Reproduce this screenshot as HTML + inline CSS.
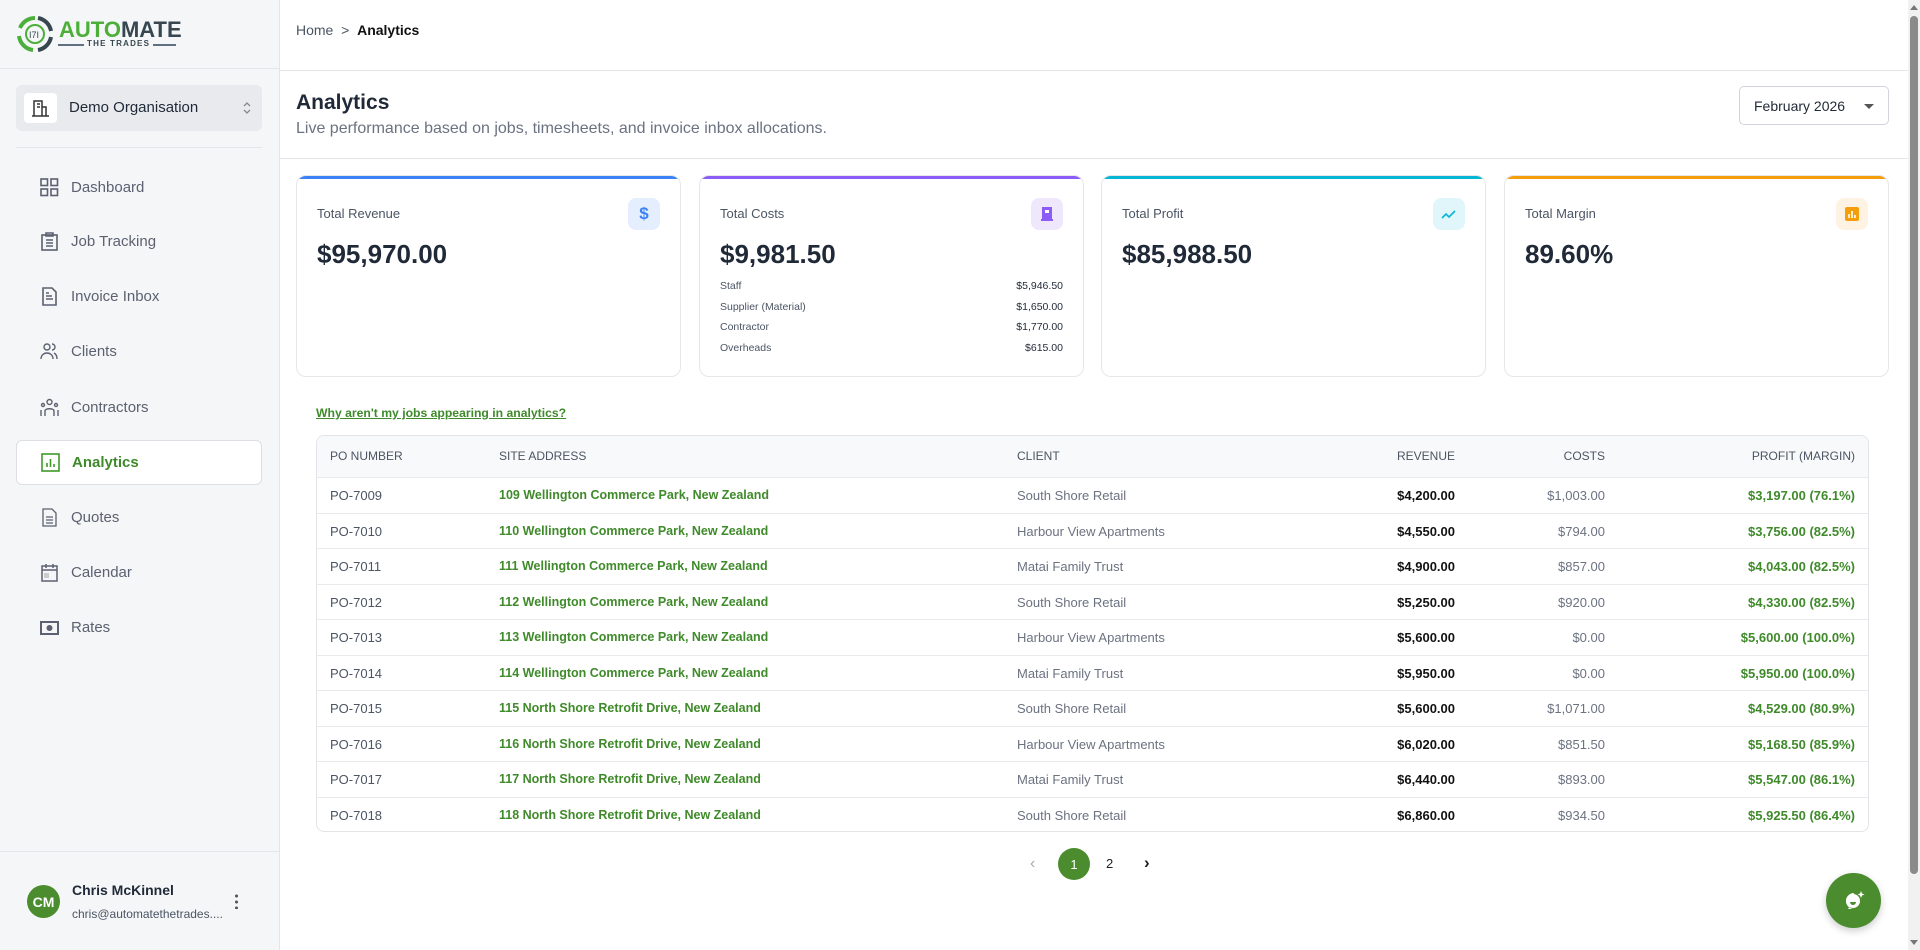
<!DOCTYPE html>
<html><head><meta charset="utf-8"><style>
*{box-sizing:border-box;margin:0;padding:0}
body{width:1920px;height:950px;overflow:hidden;font-family:"Liberation Sans",sans-serif;background:#fff;color:#1f2937;position:relative}
.abs{position:absolute}
.sb{left:0;top:0;width:280px;height:950px;background:#f5f6f8;border-right:1px solid #e3e5e8}
.nav{position:absolute;left:16px;width:246px;height:45px;display:flex;align-items:center;font-size:15px;color:#5b6170}
.nav svg{position:absolute;left:24px}
.nav span{position:absolute;left:55px}
.nav.act{background:#fff;border:1px solid #dcdfe3;border-radius:6px;color:#3f8a2a;font-weight:bold}
.card{position:absolute;top:175px;width:385px;height:202px;border:1px solid #e5e7eb;border-radius:10px;background:#fff;overflow:hidden}
.card .bar{position:absolute;left:0;top:0;right:0;height:3px}
.card .lbl{position:absolute;left:20px;top:30px;font-size:13px;color:#4b5563}
.card .val{position:absolute;left:20px;top:63px;font-size:26px;font-weight:bold;color:#1f2937}
.card .ic{position:absolute;right:20px;top:22px;width:32px;height:32px;border-radius:8px;display:flex;align-items:center;justify-content:center}
.cr{position:absolute;left:20px;right:20px;font-size:10.5px;color:#4b5563}
.cr b{position:absolute;right:0;top:0;color:#1f2937;font-weight:normal}
.tbl{left:316px;top:435px;width:1553px;height:397px;border:1px solid #e2e4e8;border-radius:8px;overflow:hidden}
.row{position:absolute;left:0;width:100%;height:36px;border-top:1px solid #e8eaed;font-size:13px}
.row div{position:absolute;top:10px;white-space:nowrap}
.hd{top:0;height:41px;background:#f8f9fa;border-top:none;color:#4b5563;font-size:12px}
.hd div{top:13px}
.c1{left:13px;color:#4b5563}.c2{left:182px;color:#3f8a2a;font-weight:bold;font-size:12.5px}.c3{left:700px;color:#6b7280}
.c4{right:413px;font-weight:bold;color:#111}.c5{right:263px;color:#6b7280}.c6{right:13px;color:#3f8a2a;font-weight:bold}
.hd .c2,.hd .c4,.hd .c6{color:#4b5563;font-weight:normal;font-size:12px}.hd .c3,.hd .c5,.hd .c1{color:#4b5563}
</style></head><body>
<div class="abs sb"></div>
<svg class="abs" style="left:15px;top:15px" width="40" height="38" viewBox="0 0 40 38"><path d="M20 3a16 16 0 0 0-15 10" stroke="#4caf3a" stroke-width="4" fill="none"/><path d="M4 21a16 16 0 0 0 14 14" stroke="#4caf3a" stroke-width="4" fill="none"/><path d="M23 3a16 16 0 0 1 13 13M36 22a16 16 0 0 1-13 13" stroke="#37474f" stroke-width="4" fill="none"/><circle cx="20" cy="19" r="9" fill="none" stroke="#4caf3a" stroke-width="2"/><text x="14" y="23" font-size="9" fill="#37474f" font-family="Liberation Sans">I7I</text></svg>
<div class="abs" style="left:59px;top:19px;font-size:22px;font-weight:bold;line-height:22px"><span style="color:#4caf3a">AUTO</span><span style="color:#37474f">MATE</span></div>
<div class="abs" style="left:58px;top:44px;width:118px;height:2px;background:#607080"></div>
<div class="abs" style="left:84px;top:39px;background:#f5f6f8;padding:0 3px;font-size:8px;font-weight:bold;color:#37474f;letter-spacing:1.2px">THE TRADES</div>
<div class="abs" style="left:0;top:68px;width:280px;height:1px;background:#e3e5e8"></div>
<div class="abs" style="left:16px;top:85px;width:246px;height:46px;background:#e8eaee;border-radius:6px"></div>
<div class="abs" style="left:24px;top:93px;width:33px;height:30px;background:#fff;border-radius:4px"></div>
<svg class="abs" style="left:31px;top:99px" width="20" height="18" viewBox="0 0 20 18" fill="none" stroke="#333" stroke-width="1.5"><path d="M3 17V2h8v15M11 8h4v9M1 17h17M6 5h3M6 8h3"/></svg>
<div class="abs" style="left:69px;top:99px;font-size:15px;color:#1f2937">Demo Organisation</div>
<svg class="abs" style="left:242px;top:100px" width="10" height="16" viewBox="0 0 10 16" fill="none" stroke="#888" stroke-width="1.3"><path d="M2 6l3-3 3 3M2 10l3 3 3-3"/></svg>
<div class="abs" style="left:16px;top:147px;width:246px;height:1px;background:#e3e5e8"></div>

<div class="nav" style="top:165px"><svg width="19" height="19" viewBox="0 0 19 19" fill="none" stroke="#5b6170" stroke-width="1.6"><rect x="1" y="1" width="6.5" height="6.5"/><rect x="11" y="1" width="6.5" height="6.5"/><rect x="1" y="11" width="6.5" height="6.5"/><rect x="11" y="11" width="6.5" height="6.5"/></svg><span>Dashboard</span></div>
<div class="nav" style="top:219px"><svg width="19" height="19" viewBox="0 0 19 19" fill="none" stroke="#5b6170" stroke-width="1.6"><rect x="2" y="3" width="15" height="15"/><path d="M6 1h7v3H6zM6 8h7M6 11h7M6 14h7"/></svg><span>Job Tracking</span></div>
<div class="nav" style="top:274px"><svg width="19" height="19" viewBox="0 0 19 19" fill="none" stroke="#5b6170" stroke-width="1.6"><path d="M3 1h9l4 4v13H3zM6 9h6M6 12h7M6 6h3"/></svg><span>Invoice Inbox</span></div>
<div class="nav" style="top:329px"><svg width="19" height="19" viewBox="0 0 19 19" fill="none" stroke="#5b6170" stroke-width="1.4"><circle cx="7" cy="5" r="3"/><path d="M1 17c0-4 3-6 6-6s6 2 6 6M12 2a3 3 0 0 1 0 6M14 11c2 1 3 3 3 6"/></svg><span>Clients</span></div>
<div class="nav" style="top:385px"><svg width="19" height="19" viewBox="0 0 19 19" fill="none" stroke="#5b6170" stroke-width="1.4"><circle cx="9.5" cy="4" r="2.5"/><circle cx="3" cy="7" r="1.5"/><circle cx="16" cy="7" r="1.5"/><path d="M5 18v-5c0-3 9-3 9 0v5M1 18v-6M18 18v-6"/></svg><span>Contractors</span></div>
<div class="nav act" style="top:440px"><svg width="19" height="19" viewBox="0 0 19 19" fill="none" stroke="#3f9a2a" stroke-width="1.6"><rect x="1" y="1" width="17" height="17"/><path d="M6 14v-4M9.5 14V6M13 14v-3"/></svg><span>Analytics</span></div>
<div class="nav" style="top:495px"><svg width="19" height="19" viewBox="0 0 19 19" fill="none" stroke="#5b6170" stroke-width="1.3"><path d="M3 1h9l4 4v13H3zM6 9h7M6 12h7M6 15h7"/></svg><span>Quotes</span></div>
<div class="nav" style="top:550px"><svg width="19" height="19" viewBox="0 0 19 19" fill="none" stroke="#5b6170" stroke-width="1.5"><rect x="2" y="3" width="15" height="15"/><path d="M2 7h15M6 1v4M13 1v4"/><rect x="4" y="10" width="5" height="5" fill="#ccc" stroke="none"/></svg><span>Calendar</span></div>
<div class="nav" style="top:605px"><svg width="19" height="19" viewBox="0 0 19 19"><rect x="1" y="4" width="17" height="12" fill="none" stroke="#5b6170" stroke-width="2"/><circle cx="9.5" cy="10" r="3" fill="#5b6170"/></svg><span>Rates</span></div>

<div class="abs" style="left:0;top:851px;width:280px;height:1px;background:#e3e5e8"></div>
<div class="abs" style="left:27px;top:885px;width:33px;height:33px;border-radius:50%;background:#4a8c2e;color:#fff;font-weight:bold;font-size:14px;display:flex;align-items:center;justify-content:center">CM</div>
<div class="abs" style="left:72px;top:882px;font-size:14px;font-weight:bold;color:#1f2937">Chris McKinnel</div>
<div class="abs" style="left:72px;top:907px;font-size:12px;color:#4b5563">chris@automatethetrades....</div>
<div class="abs" style="left:235px;top:893px;width:3px;height:16px;background:radial-gradient(circle,#555 1.4px,transparent 1.6px) 0 0/3px 6px"></div>

<div class="abs" style="left:296px;top:22px;font-size:14px;color:#4b5563">Home&nbsp;&nbsp;&gt;&nbsp;&nbsp;<span style="color:#111;font-weight:bold">Analytics</span></div>
<div class="abs" style="left:280px;top:70px;width:1628px;height:1px;background:#e3e5e8"></div>
<div class="abs" style="left:296px;top:91px;font-size:21px;font-weight:bold;color:#1f2937">Analytics</div>
<div class="abs" style="left:296px;top:120px;font-size:16px;color:#6b7280">Live performance based on jobs, timesheets, and invoice inbox allocations.</div>
<div class="abs" style="left:1739px;top:86px;width:150px;height:39px;border:1px solid #d1d5db;border-radius:5px;font-size:14px;color:#1f2937;padding:11px 0 0 14px">February 2026</div>
<div class="abs" style="left:1864px;top:104px;border:5px solid transparent;border-top:5px solid #555"></div>
<div class="abs" style="left:280px;top:158px;width:1628px;height:1px;background:#e3e5e8"></div>

<div class="card" style="left:296px"><div class="bar" style="background:#3b82f6"></div><div class="lbl">Total Revenue</div><div class="val">$95,970.00</div><div class="ic" style="background:#e4eefe;color:#3b82f6;font-weight:bold;font-size:17px">$</div></div>
<div class="card" style="left:699px"><div class="bar" style="background:#8b5cf6"></div><div class="lbl">Total Costs</div><div class="val">$9,981.50</div><div class="ic" style="background:#efe8fd"><svg width="14" height="16" viewBox="0 0 14 16"><rect x="2" y="1" width="10" height="13" fill="#8b5cf6"/><rect x="5" y="4" width="4" height="3" fill="#fff"/><rect x="1" y="13" width="12" height="2" fill="#8b5cf6"/></svg></div>
<div class="cr" style="top:104px">Staff<b>$5,946.50</b></div><div class="cr" style="top:125px">Supplier (Material)<b>$1,650.00</b></div><div class="cr" style="top:145px">Contractor<b>$1,770.00</b></div><div class="cr" style="top:166px">Overheads<b>$615.00</b></div></div>
<div class="card" style="left:1101px"><div class="bar" style="background:#06b6d4"></div><div class="lbl">Total Profit</div><div class="val">$85,988.50</div><div class="ic" style="background:#e0f6fb"><svg width="16" height="12" viewBox="0 0 16 12" fill="none" stroke="#06b6d4" stroke-width="1.6"><path d="M1 10l4-4 3 3 6-6"/></svg></div></div>
<div class="card" style="left:1504px"><div class="bar" style="background:#f59e0b"></div><div class="lbl">Total Margin</div><div class="val">89.60%</div><div class="ic" style="background:#fef3e2"><svg width="14" height="14" viewBox="0 0 14 14"><rect width="14" height="14" rx="2" fill="#f59e0b"/><path d="M4 11V7M7 11V4M10 11V8" stroke="#fff" stroke-width="1.6"/></svg></div></div>

<div class="abs" style="left:316px;top:406px;font-size:12.2px;font-weight:bold;color:#3f8a2a;text-decoration:underline">Why aren't my jobs appearing in analytics?</div>

<div class="abs tbl">
<div class="row hd"><div class="c1">PO NUMBER</div><div class="c2">SITE ADDRESS</div><div class="c3">CLIENT</div><div class="c4">REVENUE</div><div class="c5">COSTS</div><div class="c6">PROFIT (MARGIN)</div></div>
<div class="row" style="top:41px"><div class="c1">PO-7009</div><div class="c2">109 Wellington Commerce Park, New Zealand</div><div class="c3">South Shore Retail</div><div class="c4">$4,200.00</div><div class="c5">$1,003.00</div><div class="c6">$3,197.00 (76.1%)</div></div>
<div class="row" style="top:76.5px"><div class="c1">PO-7010</div><div class="c2">110 Wellington Commerce Park, New Zealand</div><div class="c3">Harbour View Apartments</div><div class="c4">$4,550.00</div><div class="c5">$794.00</div><div class="c6">$3,756.00 (82.5%)</div></div>
<div class="row" style="top:112px"><div class="c1">PO-7011</div><div class="c2">111 Wellington Commerce Park, New Zealand</div><div class="c3">Matai Family Trust</div><div class="c4">$4,900.00</div><div class="c5">$857.00</div><div class="c6">$4,043.00 (82.5%)</div></div>
<div class="row" style="top:147.5px"><div class="c1">PO-7012</div><div class="c2">112 Wellington Commerce Park, New Zealand</div><div class="c3">South Shore Retail</div><div class="c4">$5,250.00</div><div class="c5">$920.00</div><div class="c6">$4,330.00 (82.5%)</div></div>
<div class="row" style="top:183px"><div class="c1">PO-7013</div><div class="c2">113 Wellington Commerce Park, New Zealand</div><div class="c3">Harbour View Apartments</div><div class="c4">$5,600.00</div><div class="c5">$0.00</div><div class="c6">$5,600.00 (100.0%)</div></div>
<div class="row" style="top:218.5px"><div class="c1">PO-7014</div><div class="c2">114 Wellington Commerce Park, New Zealand</div><div class="c3">Matai Family Trust</div><div class="c4">$5,950.00</div><div class="c5">$0.00</div><div class="c6">$5,950.00 (100.0%)</div></div>
<div class="row" style="top:254px"><div class="c1">PO-7015</div><div class="c2">115 North Shore Retrofit Drive, New Zealand</div><div class="c3">South Shore Retail</div><div class="c4">$5,600.00</div><div class="c5">$1,071.00</div><div class="c6">$4,529.00 (80.9%)</div></div>
<div class="row" style="top:289.5px"><div class="c1">PO-7016</div><div class="c2">116 North Shore Retrofit Drive, New Zealand</div><div class="c3">Harbour View Apartments</div><div class="c4">$6,020.00</div><div class="c5">$851.50</div><div class="c6">$5,168.50 (85.9%)</div></div>
<div class="row" style="top:325px"><div class="c1">PO-7017</div><div class="c2">117 North Shore Retrofit Drive, New Zealand</div><div class="c3">Matai Family Trust</div><div class="c4">$6,440.00</div><div class="c5">$893.00</div><div class="c6">$5,547.00 (86.1%)</div></div>
<div class="row" style="top:360.5px"><div class="c1">PO-7018</div><div class="c2">118 North Shore Retrofit Drive, New Zealand</div><div class="c3">South Shore Retail</div><div class="c4">$6,860.00</div><div class="c5">$934.50</div><div class="c6">$5,925.50 (86.4%)</div></div>
</div>

<div class="abs" style="left:1030px;top:855px;font-size:16px;color:#aaa">‹</div>
<div class="abs" style="left:1058px;top:848px;width:32px;height:32px;border-radius:50%;background:#4a8c2e;color:#fff;font-size:13px;display:flex;align-items:center;justify-content:center">1</div>
<div class="abs" style="left:1106px;top:856px;font-size:13px;color:#222">2</div>
<div class="abs" style="left:1144px;top:853px;font-size:17px;color:#222;font-weight:bold">›</div>

<div class="abs" style="left:1826px;top:873px;width:55px;height:55px;border-radius:50%;background:#4a8c2e;box-shadow:0 3px 8px rgba(0,0,0,.2)"></div>
<svg class="abs" style="left:1841px;top:888px" width="26" height="26" viewBox="0 0 26 26"><path d="M13 5a8 8 0 1 0 0 16h-6l2-3" fill="#fff"/><circle cx="12" cy="13" r="7" fill="#fff"/><path d="M9 14h6a3 3 0 0 1-6 0z" fill="#4a8c2e"/><path d="M20 3l1 2.5 2.5 1-2.5 1-1 2.5-1-2.5-2.5-1 2.5-1z" fill="#fff"/></svg>

<div class="abs" style="left:1908px;top:0;width:12px;height:950px;background:#f1f1f1"></div>
<div class="abs" style="left:1910px;top:16px;width:8px;height:858px;background:#8a8a8a;border-radius:4px"></div>
<div class="abs" style="left:1910px;top:5px;border:4px solid transparent;border-bottom:5px solid #777;border-top:0"></div>
<div class="abs" style="left:1910px;top:940px;border:4px solid transparent;border-top:5px solid #777;border-bottom:0"></div>
</body></html>
